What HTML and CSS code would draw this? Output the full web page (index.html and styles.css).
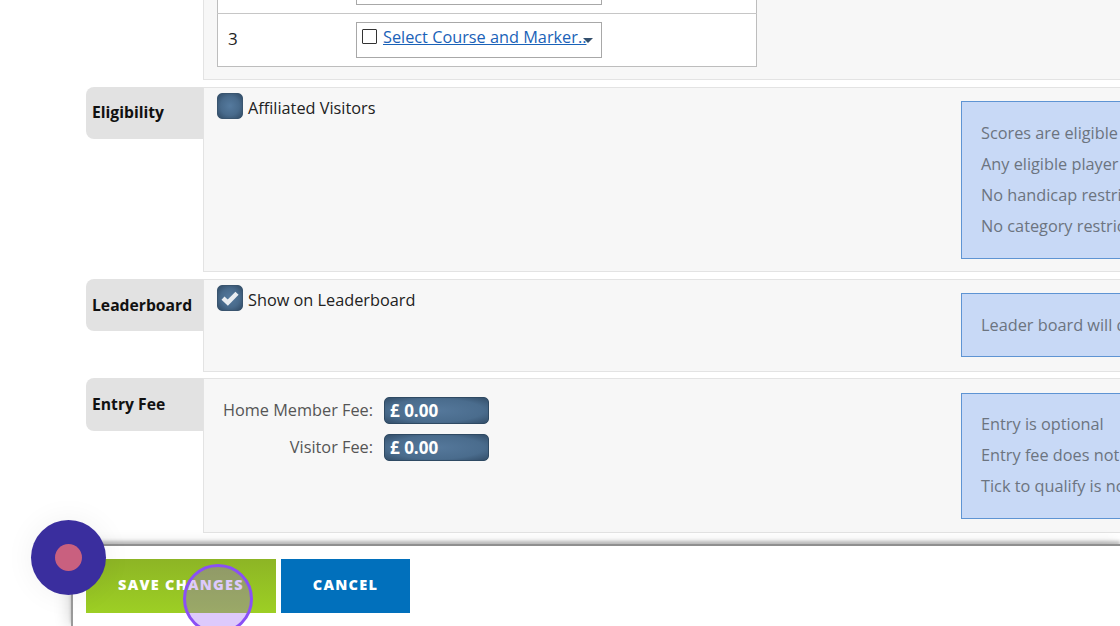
FILE: index.html
```html
<!DOCTYPE html>
<html lang="en">
<head>
<meta charset="utf-8">
<title>Competition settings</title>
<link rel="stylesheet" href="styles.css">
</head>
<body>
<div class="page">
  <section class="row row-top">
    <div class="label-spacer"></div>
    <div class="panel panel-top">
      <table class="markers">
        <tr>
          <td class="num">2</td>
          <td><div class="select"><span class="box"></span><a href="#">Select Course and Marker..</a><span class="caret"></span></div></td>
        </tr>
        <tr>
          <td class="num">3</td>
          <td><div class="select"><span class="box"></span><a href="#">Select Course and Marker..</a><span class="caret"></span></div></td>
        </tr>
      </table>
    </div>
  </section>

  <section class="row row-eligibility">
    <div class="label label-eligibility">Eligibility</div>
    <div class="panel panel-split">
      <label class="check"><span class="tick"></span><span class="check-text">Affiliated Visitors</span></label>
      <div class="info info-eligibility">
        <p>Scores are eligible for the competition leaderboard</p>
        <p>Any eligible player may enter this competition</p>
        <p>No handicap restrictions apply to this competition</p>
        <p>No category restrictions apply to this competition</p>
      </div>
    </div>
  </section>

  <section class="row row-leaderboard">
    <div class="label label-leaderboard">Leaderboard</div>
    <div class="panel panel-split">
      <label class="check"><span class="tick">
        <svg viewBox="0 0 26 26" width="26" height="26"><path d="M6 13.2l4.8 4.4L20 8.2" fill="none" stroke="#e9edf1" stroke-width="4.4"/></svg>
      </span><span class="check-text">Show on Leaderboard</span></label>
      <div class="info info-leaderboard">
        <p>Leader board will display all entrants</p>
      </div>
    </div>
  </section>

  <section class="row row-fee">
    <div class="label label-fee">Entry Fee</div>
    <div class="panel panel-split panel-fee">
      <div class="fees">
        <div class="fee-row"><span class="fee-name">Home Member Fee:</span><span class="fee-input">£ 0.00</span></div>
        <div class="fee-row"><span class="fee-name">Visitor Fee:</span><span class="fee-input">£ 0.00</span></div>
      </div>
      <div class="info info-fee">
        <p>Entry is optional</p>
        <p>Entry fee does not apply to all players</p>
        <p>Tick to qualify is not required to enter</p>
      </div>
    </div>
  </section>
</div>

<footer class="actions">
  <button class="btn btn-save" type="button">SAVE CHANGES</button>
  <button class="btn btn-cancel" type="button">CANCEL</button>
</footer>

<div class="guide-dot"><span class="guide-core"></span></div>
<div class="click-ring"></div>
</body>
</html>
```
FILE: styles.css
```css
* { box-sizing: border-box; }
html, body { margin: 0; height: 100%; overflow: hidden; background: #fff; }
body { font-family: "Open Sans", "Noto Sans", sans-serif; font-size: 16.3px; color: #222; position: relative; }

.page { padding-left: 86px; height: 626px; overflow: hidden; }

.row { display: flex; align-items: flex-start; }
.row-top { height: 80px; }
.row-eligibility { margin-top: 7px; height: 185px; }
.row-leaderboard { margin-top: 7px; height: 93px; }
.row-fee { margin-top: 6px; height: 155px; }

.label-spacer { width: 117px; flex: none; }
.label {
  width: 117px; flex: none; padding-left: 6px;
  background: #e2e2e2; border-radius: 8px 0 0 8px; font-size: 15.7px;
  font-weight: 700; color: #111; display: flex; align-items: center;
}
.label-eligibility { height: 52px; padding-bottom: 2px; }
.label-leaderboard { height: 52px; }
.label-fee { height: 53px; padding-bottom: 2px; }

.panel {
  flex: 1; height: 100%; background: #f7f7f7;
  border: 1px solid #e3e3e3; border-right: 0; min-width: 917px;
}
.panel-top { padding-left: 13px; height: 80px; border-top: 0; position: relative; }
.panel-split { display: flex; justify-content: space-between; align-items: flex-start; padding: 5px 0 0 13px; width: 917px; flex: none; min-width: 0; overflow: hidden; }

.markers {
  width: 540px; margin-top: -40px; border-collapse: collapse; background: #fff;
  border: 1px solid #bdbdbd; table-layout: fixed;
}
.markers td { height: 53px; padding: 0; border-top: 1px solid #c6c6c6; vertical-align: middle; }
.markers .num { width: 138px; padding-left: 10px; color: #222; font-size: 17px; padding-bottom: 4px; }
.select {
  width: 246px; height: 36px; border: 1px solid #a8a8a8; background: #fff;
  display: flex; align-items: center; padding-left: 5px; position: relative;
}
.box { width: 15px; height: 15px; border: 1px solid #333; background: #fff; flex: none; margin: -8px 6.5px 0 0; border-radius: 1px; }
.select a { color: #1a62b8; text-decoration: underline; white-space: nowrap; margin-top: -7px; }
.caret {
  position: absolute; right: 8px; top: 15px;
  border: 5px solid transparent; border-top: 5px solid #34506e; border-bottom: 0;
}

.check { display: flex; align-items: flex-start; line-height: 26px; color: #222; white-space: nowrap; }
.check-text { margin-top: 2px; }
.tick {
  width: 26px; height: 26px; margin: 0 5px 0 0; flex: none; border-radius: 5px; border: 1px solid #3a556f;
  background: radial-gradient(circle, #557a9e 0%, #486a8b 55%, #304a64 100%);
  display: block; position: relative;
}
.tick svg { position: absolute; left: -1px; top: -1px; display: block; }

.info {
  width: 240px; flex: none; margin: 8px -81px 0 0; padding: 21px 0 0 19px;
  background: #c8d9f6; border: 1px solid #5e94d3; color: #6c7480; white-space: nowrap; overflow: hidden;
  border-right: 0;
}
.info p { margin: 0 0 9.4px; line-height: 21.7px; }
.info-eligibility { height: 158px; }
.info-leaderboard { height: 64px; padding-top: 21px; }
.info-fee { height: 126px; margin-top: 14px; padding-top: 20px; }

.panel-fee { padding-top: 0; }
.fees { margin-top: 18px; width: 285px; margin-left: -13px; display: flex; flex-direction: column; gap: 10px; }
.fee-row { display: flex; justify-content: flex-end; align-items: center; gap: 11px; height: 27px; }
.fee-name { color: #555; margin-top: -1px; }
.fee-input {
  width: 105px; height: 27px; border-radius: 5px; border: 1px solid #2f4a63;
  background: radial-gradient(ellipse at center, #55789b 0%, #4a6c8d 65%, #334e69 100%);
  color: #fff; font-weight: 700; font-size: 17px; padding-left: 5px; line-height: 25px; white-space: pre;
}

.actions {
  position: absolute; left: 71px; top: 544px; width: 1049px; height: 82px;
  background: #fff; border-top: 2px solid #8f8f8f; border-left: 2px solid #9a9a9a;
  box-shadow: 0 -3px 3px rgba(0,0,0,.22), -3px 0 14px rgba(0,0,0,.14);
  display: flex; gap: 5px; padding: 13px 0 0 13px; align-items: flex-start;
}
.btn {
  border: 0; height: 54px; color: #fff; font-family: "Open Sans", sans-serif; font-weight: 800;
  font-size: 14.5px; letter-spacing: 1.25px; padding: 0 0 3px; cursor: pointer;
}
.btn-save { width: 190px; background: linear-gradient(#8db525, #9dcf24); }
.btn-cancel { width: 129px; background: #0170bc; }

.guide-dot {
  position: absolute; left: 31px; top: 519.5px; width: 75px; height: 75px; border-radius: 50%;
  background: #3a2e9e; display: flex; align-items: center; justify-content: center;
  box-shadow: 0 0 30px rgba(0,0,0,.06);
}
.guide-core { width: 27px; height: 27px; border-radius: 50%; background: #c9607f; }
.click-ring {
  position: absolute; left: 183px; top: 564px; width: 70px; height: 70px; border-radius: 50%;
  border: 3px solid #8a50f5; background: rgba(150,90,245,.32);
}
```
